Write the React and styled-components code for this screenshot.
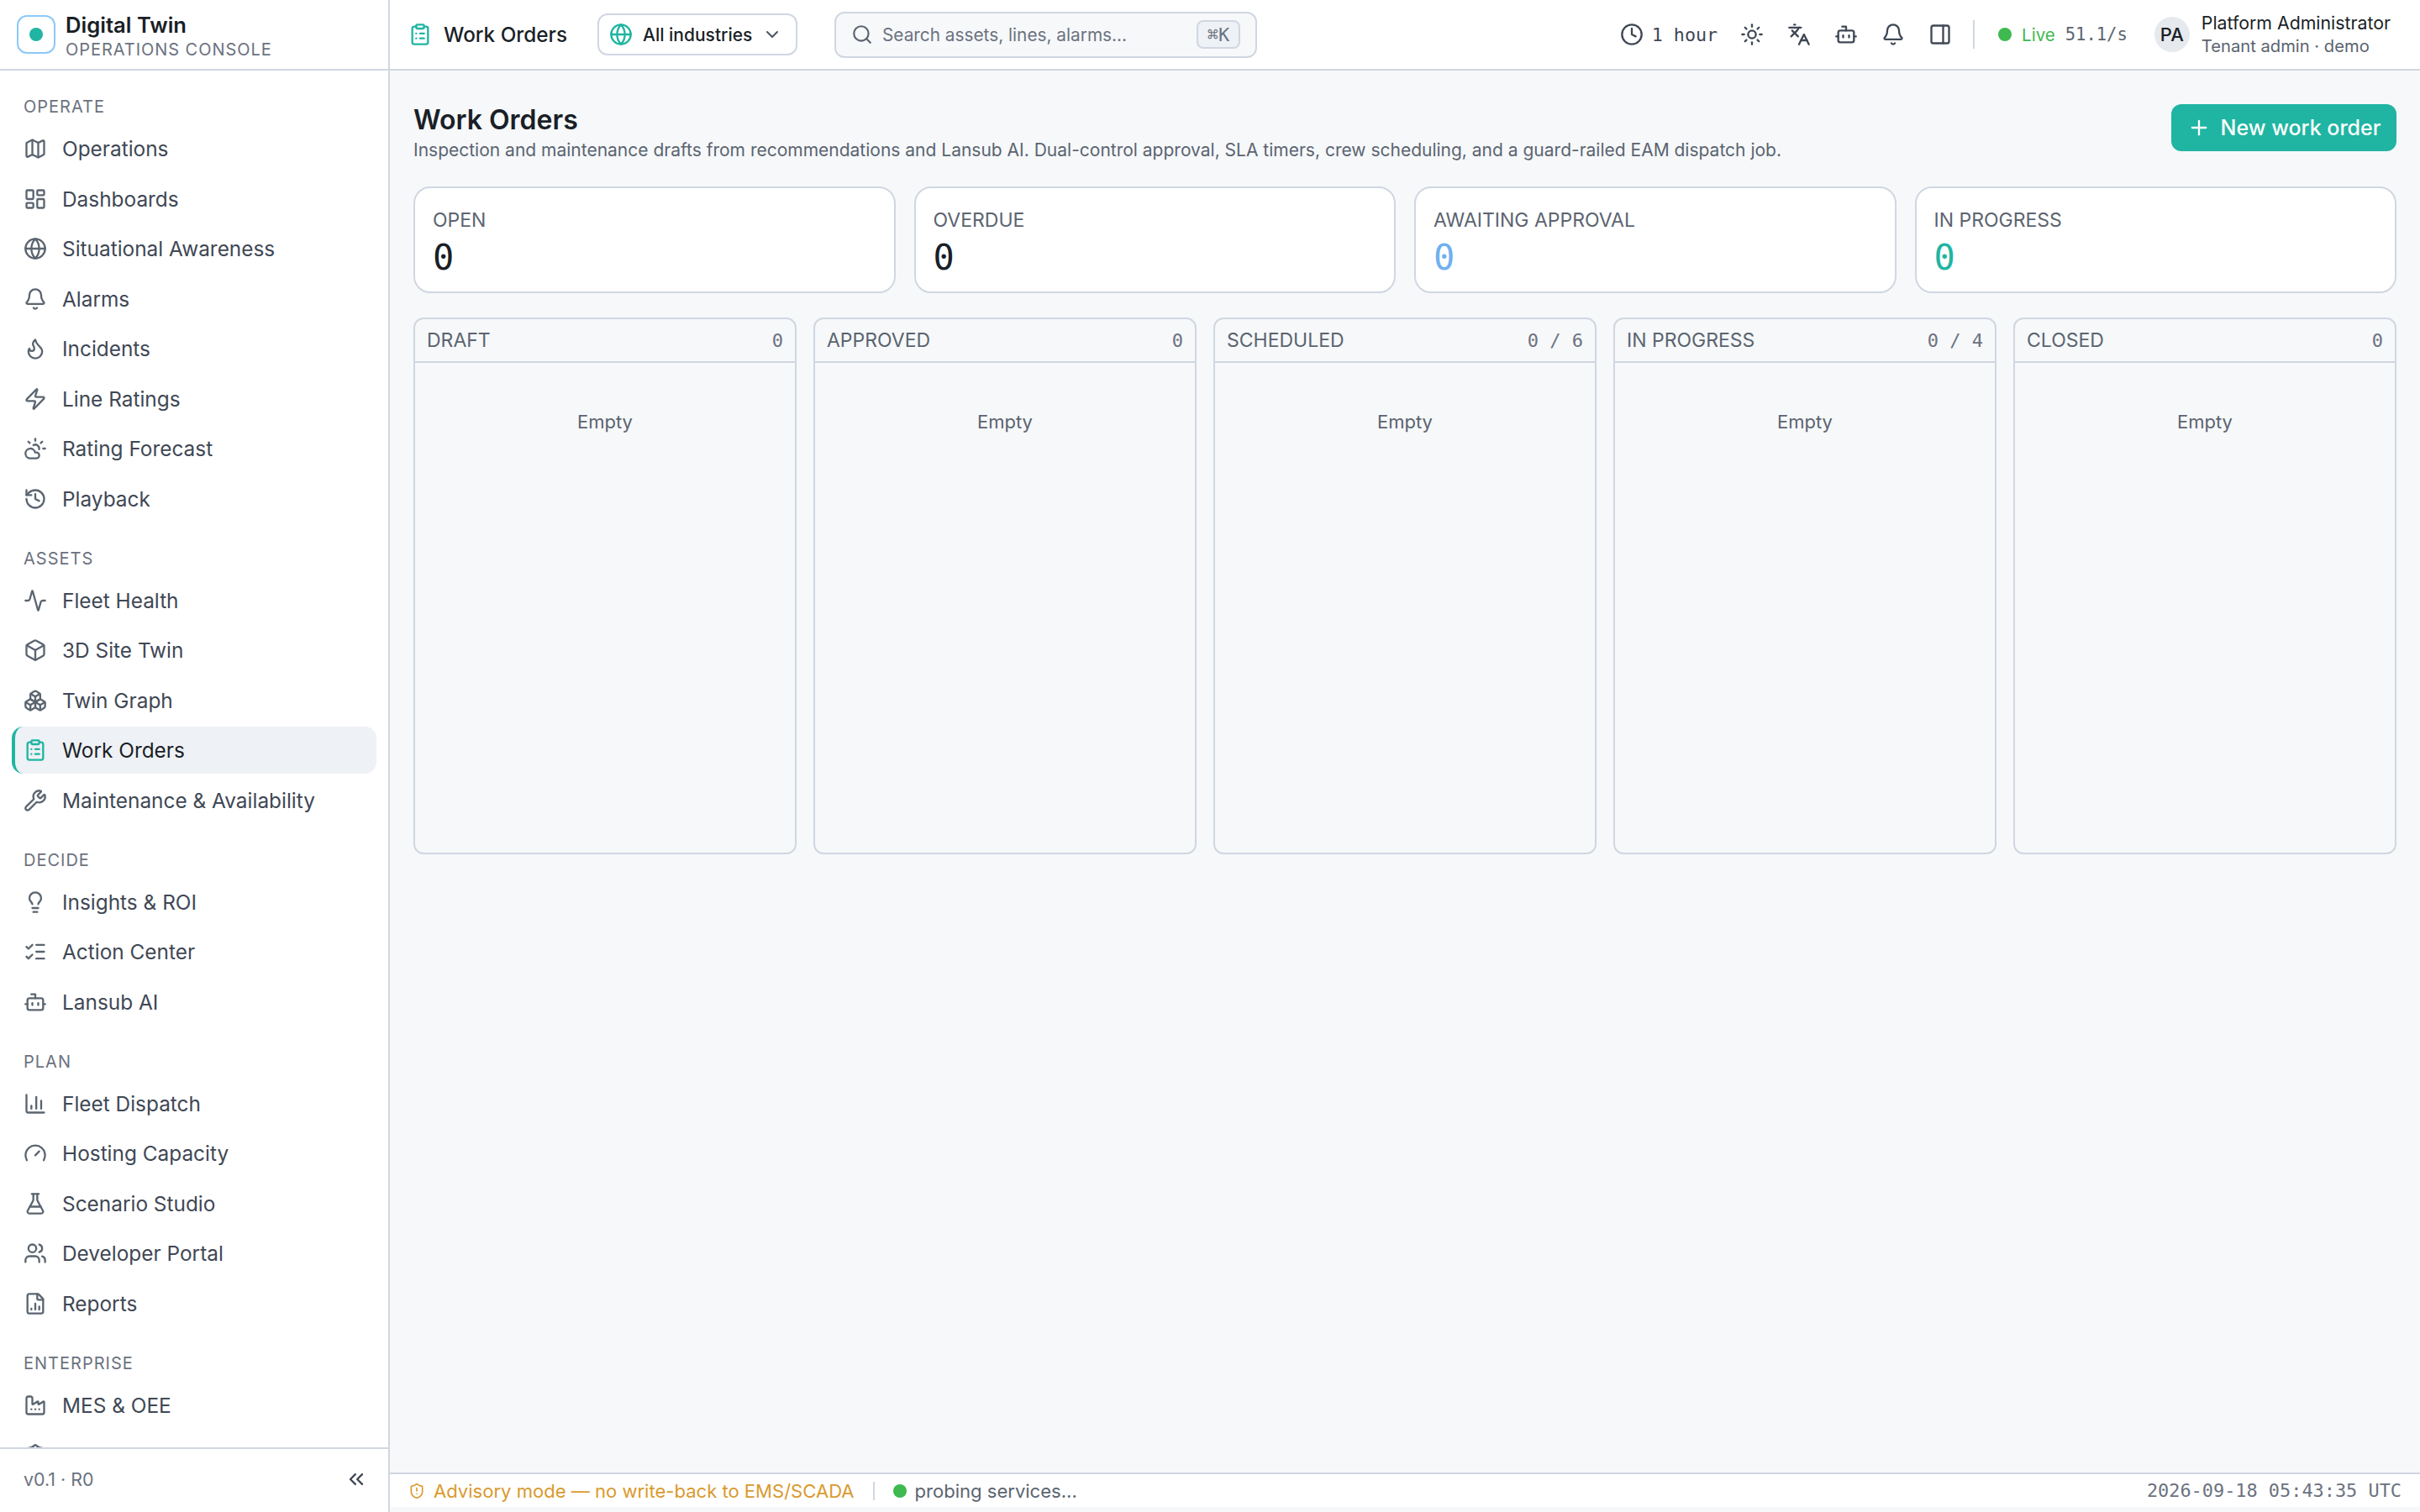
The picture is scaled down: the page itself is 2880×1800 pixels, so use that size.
import React from 'react';
import styled, { createGlobalStyle } from 'styled-components';
import {
  Activity, Bell, Bot, Box, Boxes, ChartColumn, ChevronDown, ChevronsLeft, ClipboardList,
  Clock, CloudSun, Factory, FileChartColumn, Flame, FlaskConical, Gauge, Globe, History,
  Languages, LayoutDashboard, Lightbulb, ListChecks, Map, PanelRight, Plus, Search, Shield,
  ShieldAlert, Sun, Users, Wrench, Zap,
} from 'lucide-react';

const navSections = [
  {
    title: 'OPERATE',
    items: [
      ['Operations', Map],
      ['Dashboards', LayoutDashboard],
      ['Situational Awareness', Globe],
      ['Alarms', Bell],
      ['Incidents', Flame],
      ['Line Ratings', Zap],
      ['Rating Forecast', CloudSun],
      ['Playback', History],
    ],
  },
  {
    title: 'ASSETS',
    items: [
      ['Fleet Health', Activity],
      ['3D Site Twin', Box],
      ['Twin Graph', Boxes],
      ['Work Orders', ClipboardList],
      ['Maintenance & Availability', Wrench],
    ],
  },
  {
    title: 'DECIDE',
    items: [
      ['Insights & ROI', Lightbulb],
      ['Action Center', ListChecks],
      ['Lansub AI', Bot],
    ],
  },
  {
    title: 'PLAN',
    items: [
      ['Fleet Dispatch', ChartColumn],
      ['Hosting Capacity', Gauge],
      ['Scenario Studio', FlaskConical],
      ['Developer Portal', Users],
      ['Reports', FileChartColumn],
    ],
  },
  {
    title: 'ENTERPRISE',
    items: [
      ['MES & OEE', Factory],
      // next entry is scrolled out of view, only the top of its icon shows
      ['', Shield],
    ],
  },
];

const stats = [
  { label: 'OPEN', color: '#1a1f27' },
  { label: 'OVERDUE', color: '#1a1f27' },
  { label: 'AWAITING APPROVAL', color: '#6fb0ef' },
  { label: 'IN PROGRESS', color: '#1fb5a2' },
];

const columns = [
  { title: 'DRAFT', count: '0' },
  { title: 'APPROVED', count: '0' },
  { title: 'SCHEDULED', count: '0 / 6' },
  { title: 'IN PROGRESS', count: '0 / 4' },
  { title: 'CLOSED', count: '0' },
];

const App = () => {
  return (
    <>
      <GlobalStyle />
      <Shell>
        <Sidebar>
          <Brand>
            <LogoBox>
              <LogoDot />
            </LogoBox>
            <BrandText>
              <BrandName>Digital Twin</BrandName>
              <BrandSub>OPERATIONS CONSOLE</BrandSub>
            </BrandText>
          </Brand>
          <Nav>
            {navSections.map((section) => (
              <NavSection key={section.title}>
                <SectionLabel>{section.title}</SectionLabel>
                {section.items.map(([label, Icon]) => (
                  <NavItem key={label} $active={label === 'Work Orders'}>
                    <Icon size={28} strokeWidth={2} />
                    {label && <span>{label}</span>}
                  </NavItem>
                ))}
              </NavSection>
            ))}
          </Nav>
          <SidebarFooter>
            <Version>v0.1 · R0</Version>
            <ChevronsLeft size={28} strokeWidth={2} color="#3f4855" />
          </SidebarFooter>
        </Sidebar>

        <Main>
          <Header>
            <HeaderLeft>
              <ClipboardList size={28} strokeWidth={2} color="#1fb5a2" />
              <PageCrumb>Work Orders</PageCrumb>
              <IndustrySelect>
                <Globe size={28} strokeWidth={2} color="#1fb5a2" />
                <span>All industries</span>
                <ChevronDown size={24} strokeWidth={2} color="#4b5563" />
              </IndustrySelect>
              <SearchBox>
                <Search size={26} strokeWidth={2} color="#5b6470" />
                <SearchText>Search assets, lines, alarms...</SearchText>
                <Kbd>⌘K</Kbd>
              </SearchBox>
            </HeaderLeft>
            <HeaderRight>
              <TimeRange>
                <Clock size={28} strokeWidth={2} />
                <span>1 hour</span>
              </TimeRange>
              <HeaderIcons>
                <Sun size={28} strokeWidth={2} />
                <Languages size={28} strokeWidth={2} />
                <Bot size={28} strokeWidth={2} />
                <Bell size={28} strokeWidth={2} />
                <PanelRight size={28} strokeWidth={2} />
              </HeaderIcons>
              <VDivider />
              <LiveBlock>
                <Dot />
                <LiveText>Live</LiveText>
                <Rate>51.1/s</Rate>
              </LiveBlock>
              <UserBlock>
                <Avatar>PA</Avatar>
                <div>
                  <UserName>Platform Administrator</UserName>
                  <UserRole>Tenant admin · demo</UserRole>
                </div>
              </UserBlock>
            </HeaderRight>
          </Header>

          <Content>
            <TitleRow>
              <div>
                <Title>Work Orders</Title>
                <Subtitle>
                  Inspection and maintenance drafts from recommendations and Lansub AI. Dual-control
                  approval, SLA timers, crew scheduling, and a guard-railed EAM dispatch job.
                </Subtitle>
              </div>
              <PrimaryButton>
                <Plus size={28} strokeWidth={2} />
                New work order
              </PrimaryButton>
            </TitleRow>

            <StatGrid>
              {stats.map((stat) => (
                <StatCard key={stat.label}>
                  <StatLabel>{stat.label}</StatLabel>
                  <StatValue $color={stat.color}>0</StatValue>
                </StatCard>
              ))}
            </StatGrid>

            <Board>
              {columns.map((col) => (
                <Column key={col.title}>
                  <ColumnHead>
                    <span>{col.title}</span>
                    <ColumnCount>{col.count}</ColumnCount>
                  </ColumnHead>
                  <EmptyNote>Empty</EmptyNote>
                </Column>
              ))}
            </Board>
          </Content>

          <StatusBar>
            <StatusLeft>
              <Advisory>
                <ShieldAlert size={20} strokeWidth={2} />
                Advisory mode — no write-back to EMS/SCADA
              </Advisory>
              <StatusDivider />
              <Probe>
                <Dot />
                probing services...
              </Probe>
            </StatusLeft>
            <Clockline>2026-09-18 05:43:35 UTC</Clockline>
          </StatusBar>
        </Main>
      </Shell>
    </>
  );
};

export default App;

const borderColor = '#d0d7e1';
const sans = `Inter, "Noto Sans", sans-serif`;
const mono = `"DejaVu Sans Mono", "Liberation Mono", monospace`;

const GlobalStyle = createGlobalStyle`
  * { box-sizing: border-box; }
  html, body { margin: 0; padding: 0; background: #f6f8fa; font-family: ${sans}; color: #1a1f27; }
  svg { display: block; flex-shrink: 0; }
`;

const Shell = styled.div`
  display: flex;
  width: 2880px;
  height: 1800px;
  overflow: hidden;
`;

const Sidebar = styled.aside`
  width: 464px;
  flex-shrink: 0;
  display: flex;
  flex-direction: column;
  background: #fff;
  border-right: 2px solid ${borderColor};
`;

const Brand = styled.div`
  height: 84px;
  flex-shrink: 0;
  display: flex;
  align-items: center;
  gap: 12px;
  padding: 0 20px;
  border-bottom: 2px solid ${borderColor};
`;

const BrandText = styled.div`
  padding-top: 5px;
`;

const LogoBox = styled.div`
  width: 46px;
  height: 46px;
  display: flex;
  align-items: center;
  justify-content: center;
  border: 2px solid #8cc8f8;
  border-radius: 12px;
`;

const LogoDot = styled.div`
  width: 16px;
  height: 16px;
  border-radius: 50%;
  background: #1fb5a2;
`;

const BrandName = styled.div`
  font-size: 25.6px;
  line-height: 30px;
  font-weight: 600;
  color: #1a1f27;
`;

const BrandSub = styled.div`
  font-size: 20px;
  line-height: 28px;
  letter-spacing: 0.95px;
  color: #6b7280;
`;

const Nav = styled.nav`
  flex: 1;
  min-height: 0;
  overflow: hidden;
  display: flex;
  flex-direction: column;
  gap: 30px;
  padding: 30px 14px 0 14px;
`;

const NavSection = styled.div`
  display: flex;
  flex-direction: column;
  gap: 3.5px;
`;

const SectionLabel = styled.div`
  height: 24px;
  line-height: 24px;
  margin: 1px 0 6.5px;
  padding-left: 14px;
  font-size: 20px;
  letter-spacing: 1px;
  color: #6b7280;
`;

const NavItem = styled.div`
  height: 56px;
  flex-shrink: 0;
  display: flex;
  align-items: center;
  gap: 18px;
  padding-left: 10px;
  border-left: 4px solid ${(props) => (props.$active ? '#1fb5a2' : 'transparent')};
  border-radius: 14px;
  background: ${(props) => (props.$active ? '#eef1f5' : 'transparent')};
  font-size: 24.4px;
  color: ${(props) => (props.$active ? '#1a1f27' : '#3f4855')};

  svg {
    color: ${(props) => (props.$active ? '#1fb5a2' : '#5b6570')};
  }
`;

const SidebarFooter = styled.div`
  height: 77px;
  flex-shrink: 0;
  display: flex;
  align-items: center;
  justify-content: space-between;
  padding: 0 24px 3px 28px;
  border-top: 2px solid ${borderColor};
  background: #fff;
`;

const Version = styled.span`
  font-size: 21.4px;
  color: #6b7280;
`;

const Main = styled.div`
  flex: 1;
  min-width: 0;
  display: flex;
  flex-direction: column;
  padding-bottom: 6px;
`;

const Header = styled.header`
  height: 84px;
  flex-shrink: 0;
  display: flex;
  align-items: center;
  justify-content: space-between;
  padding: 0 35px 0 22px;
  background: #fff;
  border-bottom: 2px solid ${borderColor};
`;

const HeaderLeft = styled.div`
  display: flex;
  align-items: center;
`;

const PageCrumb = styled.span`
  margin: 0 36px 0 14px;
  font-size: 24.3px;
  font-weight: 500;
  color: #1a1f27;
`;

const IndustrySelect = styled.div`
  width: 238px;
  height: 50px;
  display: flex;
  align-items: center;
  gap: 12px;
  padding: 0 12px;
  border: 2px solid ${borderColor};
  border-radius: 12px;
  font-size: 21px;
  font-weight: 500;
  white-space: nowrap;
  color: #1a1f27;
`;

const SearchBox = styled.div`
  width: 503px;
  height: 55px;
  margin-left: 44px;
  display: flex;
  align-items: center;
  gap: 11px;
  padding: 0 18px;
  background: #f6f8fa;
  border: 2px solid ${borderColor};
  border-radius: 12px;
`;

const SearchText = styled.span`
  flex: 1;
  font-size: 20.8px;
  color: #6b7280;
`;

const Kbd = styled.span`
  width: 52px;
  height: 34px;
  display: flex;
  align-items: center;
  justify-content: center;
  background: #eef1f5;
  border: 2px solid ${borderColor};
  border-radius: 8px;
  font-family: ${mono};
  font-size: 22px;
  color: #6b7280;
`;

const HeaderRight = styled.div`
  display: flex;
  align-items: center;
`;

const TimeRange = styled.div`
  display: flex;
  align-items: center;
  gap: 10px;
  font-family: ${mono};
  font-size: 21.7px;
  color: #3f4855;
`;

const HeaderIcons = styled.div`
  display: flex;
  align-items: center;
  gap: 28px;
  margin-left: 27px;
  color: #3f4855;
`;

const VDivider = styled.div`
  width: 2px;
  height: 34px;
  margin: 0 28px 0 25px;
  background: ${borderColor};
`;

const LiveBlock = styled.div`
  display: flex;
  align-items: center;
`;

const Dot = styled.span`
  width: 16px;
  height: 16px;
  border-radius: 50%;
  background: #3fb950;
  flex-shrink: 0;
`;

const LiveText = styled.span`
  margin: 0 12px;
  font-size: 20.5px;
  color: #3fb950;
`;

const Rate = styled.span`
  font-family: ${mono};
  font-size: 20.5px;
  color: #5b6470;
`;

const UserBlock = styled.div`
  display: flex;
  align-items: center;
  gap: 14px;
  margin-left: 32px;
`;

const Avatar = styled.div`
  width: 42px;
  height: 42px;
  display: flex;
  align-items: center;
  justify-content: center;
  border-radius: 50%;
  background: #e6e9ee;
  font-size: 22px;
  font-weight: 500;
  color: #1a1f27;
`;

const UserName = styled.div`
  font-size: 21.3px;
  line-height: 28px;
  white-space: nowrap;
  color: #1a1f27;
`;

const UserRole = styled.div`
  font-size: 20.2px;
  line-height: 28px;
  color: #5b6470;
`;

const Content = styled.main`
  flex: 1;
  min-height: 0;
  padding: 40px 28px 0;
  display: flex;
  flex-direction: column;
`;

const TitleRow = styled.div`
  display: flex;
  align-items: flex-start;
  justify-content: space-between;
`;

const Title = styled.h1`
  margin: 0;
  font-size: 32px;
  line-height: 38px;
  font-weight: 600;
  color: #1a1f27;
`;

const Subtitle = styled.p`
  margin: 2px 0 0;
  font-size: 21px;
  line-height: 30px;
  color: #5b6470;
`;

const PrimaryButton = styled.button`
  width: 268px;
  height: 56px;
  display: flex;
  align-items: center;
  justify-content: center;
  gap: 12px;
  border: none;
  border-radius: 12px;
  background: #1fb5a2;
  font-family: ${sans};
  font-size: 25px;
  font-weight: 500;
  color: #fff;
`;

const StatGrid = styled.div`
  display: grid;
  grid-template-columns: repeat(4, 1fr);
  gap: 22px;
  margin-top: 28px;
`;

const StatCard = styled.div`
  height: 127px;
  padding: 24px 21px;
  background: #fff;
  border: 2px solid ${borderColor};
  border-radius: 20px;
`;

const StatLabel = styled.div`
  font-size: 23px;
  line-height: 28px;
  color: #5b6470;
`;

const StatValue = styled.div`
  margin-top: 7px;
  font-family: ${mono};
  font-size: 42px;
  line-height: 48px;
  color: ${(props) => props.$color};
`;

const Board = styled.div`
  display: grid;
  grid-template-columns: repeat(5, 1fr);
  gap: 20px;
  margin-top: 29px;
`;

const Column = styled.div`
  height: 639px;
  border: 2px solid ${borderColor};
  border-radius: 12px;
`;

const ColumnHead = styled.div`
  height: 52px;
  display: flex;
  align-items: center;
  justify-content: space-between;
  padding: 0 14px;
  border-bottom: 2px solid ${borderColor};
  font-size: 23px;
  color: #5b6470;
`;

const ColumnCount = styled.span`
  font-family: ${mono};
  font-size: 22px;
  color: #6b7280;
`;

const EmptyNote = styled.div`
  margin-top: 55px;
  text-align: center;
  font-size: 22px;
  line-height: 30px;
  color: #5b6470;
`;

const StatusBar = styled.footer`
  height: 41px;
  flex-shrink: 0;
  display: flex;
  align-items: center;
  justify-content: space-between;
  padding: 0 22px;
  background: #fff;
  border-top: 2px solid ${borderColor};
  font-size: 22.05px;
`;

const StatusLeft = styled.div`
  display: flex;
  align-items: center;
`;

const Advisory = styled.div`
  display: flex;
  align-items: center;
  gap: 10px;
  color: #d99a2e;
`;

const StatusDivider = styled.div`
  width: 2px;
  height: 22px;
  margin: 0 22px;
  background: ${borderColor};
`;

const Probe = styled.div`
  display: flex;
  align-items: center;
  gap: 10px;
  color: #5b6470;
`;

const Clockline = styled.span`
  font-family: ${mono};
  font-size: 21.9px;
  color: #6b7280;
`;
